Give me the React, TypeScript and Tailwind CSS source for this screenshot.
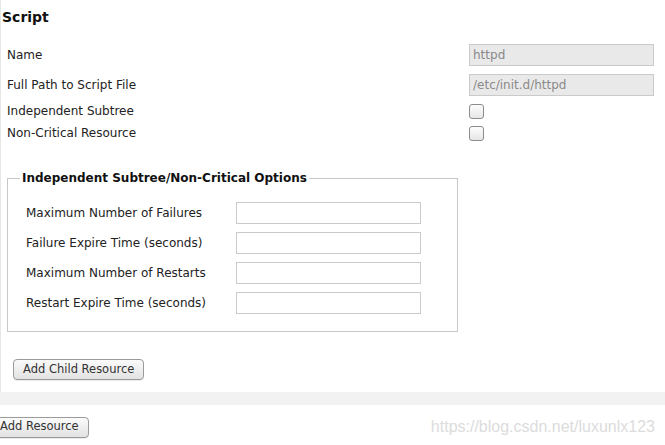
import React from 'react';

const font = { fontFamily: '"DejaVu Sans", Verdana, sans-serif' };

function Checkbox() {
  return (
    <span className="block w-[15px] h-[15px] rounded-[3px] border border-[#8c8c8c] bg-gradient-to-b from-[#fdfdfd] to-[#e6e6e6]" />
  );
}

function Btn({ label, className }: { label: string; className?: string }) {
  return (
    <button
      type="button"
      className={`h-[21px] px-[9px] rounded-[4px] border border-[#9a9a9a] bg-gradient-to-b from-[#fbfbfb] to-[#e2e2e2] text-[11.5px] leading-none text-[#333] shadow-[0_1px_0_rgba(0,0,0,0.08)] ${className ?? ''}`}
    >
      {label}
    </button>
  );
}

const options = [
  'Maximum Number of Failures',
  'Failure Expire Time (seconds)',
  'Maximum Number of Restarts',
  'Restart Expire Time (seconds)',
];

export default function App() {
  return (
    <div className="w-[665px] h-[445px] bg-white overflow-hidden text-[12px] text-[#222]" style={font}>
      <div className="border-l border-[#e6e6e6] pb-[12px]">
        <h2 className="h-[34px] pl-[1px] pt-[8px] text-[14px] font-bold leading-[18px] text-[#111]">Script</h2>

        <div className="mt-[6px] grid grid-cols-[462px_185px] pl-[6px]">
          <div className="h-[30px] flex items-center">Name</div>
          <div className="h-[30px] flex items-center">
            <input
              readOnly
              value="httpd"
              className="w-[185px] h-[22px] border border-[#cacaca] bg-[#e9e9e9] px-[3px] text-[12px] text-[#8a8a8a] outline-none"
            />
          </div>

          <div className="h-[30px] flex items-center">Full Path to Script File</div>
          <div className="h-[30px] flex items-center">
            <input
              readOnly
              value="/etc/init.d/httpd"
              className="w-[185px] h-[22px] border border-[#cacaca] bg-[#e9e9e9] px-[3px] text-[12px] text-[#8a8a8a] outline-none"
            />
          </div>

          <div className="h-[22px] flex items-center">Independent Subtree</div>
          <div className="h-[22px] flex items-center">
            <Checkbox />
          </div>

          <div className="h-[22px] flex items-center">Non-Critical Resource</div>
          <div className="h-[22px] flex items-center">
            <Checkbox />
          </div>
        </div>

        <fieldset className="mt-[26px] ml-[6px] w-[451px] border border-[#c8c8c8] pl-[12px] pb-[13px]">
          <legend className="px-[2px] text-[12px] font-bold leading-[16px] text-[#111]">
            Independent Subtree/Non-Critical Options
          </legend>
          <div className="mt-[12px] pl-[6px] grid grid-cols-[210px_185px]">
            {options.map((o) => (
              <React.Fragment key={o}>
                <div className="h-[30px] flex items-center">{o}</div>
                <div className="h-[30px] flex items-center">
                  <input className="w-[185px] h-[22px] border border-[#cacaca] bg-white outline-none" />
                </div>
              </React.Fragment>
            ))}
          </div>
        </fieldset>

        <Btn label="Add Child Resource" className="mt-[27px] ml-[12px]" />
      </div>

      <div className="h-[13px] bg-[#f2f2f2]" />

      <div className="mt-[10px] flex items-center justify-between">
        <Btn label="Add Resource" className="-ml-[10px]" />
        <span
          className="mr-[10px] text-[16px] text-[#dcdcdc]"
          style={{ fontFamily: '"Liberation Sans", Arial, sans-serif' }}
        >
          https://blog.csdn.net/luxunlx123
        </span>
      </div>
    </div>
  );
}
